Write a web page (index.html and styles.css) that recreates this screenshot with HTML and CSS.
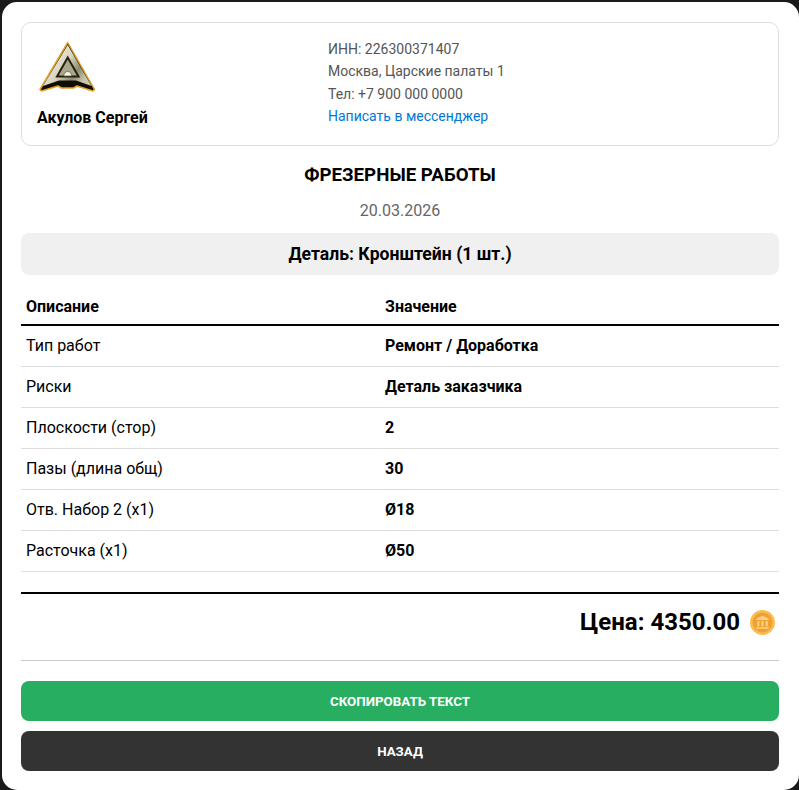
FILE: index.html
```html
<!DOCTYPE html>
<html lang="ru">
<head>
    <meta charset="UTF-8">
    <meta name="viewport" content="width=device-width, initial-scale=1.0">
    <title>Фрезерные работы</title>
    <link rel="stylesheet" href="styles.css">
</head>
<body>

<div class="sheet">
    <div class="header-box">
        <div class="company">
            <svg class="logo" viewBox="0 0 60 60" width="60" height="60">
                <defs>
                    <linearGradient id="metal" x1="0" y1="0" x2="1" y2="0.6">
                        <stop offset="0" stop-color="#8f8b6e"/>
                        <stop offset="0.3" stop-color="#e9e6d6"/>
                        <stop offset="0.55" stop-color="#d8d4be"/>
                        <stop offset="0.8" stop-color="#8d8a72"/>
                        <stop offset="1" stop-color="#c9c6ae"/>
                    </linearGradient>
                </defs>
                <path d="M30.7 4.5 L3 51.5 L4.5 53 L21 48 L24.5 50 L36.5 50 L40 48 L56 53 L57.5 51.5 Z" fill="#0f0d06" stroke="#e0a028" stroke-width="1.5" stroke-linejoin="round"/>
                <path d="M30.7 7 L6 48 L22 42.5 L39 42.5 L54.5 48 Z" fill="url(#metal)"/>
                <path d="M30.7 19.5 L20 38.5 L41.5 38.5 Z" fill="#a9a68c" stroke="#25220f" stroke-width="2"/>
                <path d="M26.7 38 A4 4.5 0 0 1 34.7 38 Z" fill="#f7f4e8" stroke="#55513a" stroke-width="0.7"/>
            </svg>
            <div class="company-name">Акулов Сергей</div>
        </div>
        <div class="contacts">
            <div>ИНН: 226300371407</div>
            <div>Москва, Царские палаты 1</div>
            <div>Тел: +7 900 000 0000</div>
            <a href="#">Написать в мессенджер</a>
        </div>
    </div>

    <h1>ФРЕЗЕРНЫЕ РАБОТЫ</h1>
    <div class="date">20.03.2026</div>
    <div class="detail-title">Деталь: Кронштейн (1 шт.)</div>

    <table class="spec">
        <thead>
            <tr>
                <th class="col-name">Описание</th>
                <th>Значение</th>
            </tr>
        </thead>
        <tbody>
            <tr><td>Тип работ</td><td>Ремонт / Доработка</td></tr>
            <tr><td>Риски</td><td>Деталь заказчика</td></tr>
            <tr><td>Плоскости (стор)</td><td>2</td></tr>
            <tr><td>Пазы (длина общ)</td><td>30</td></tr>
            <tr><td>Отв. Набор 2 (x1)</td><td>Ø18</td></tr>
            <tr><td>Расточка (x1)</td><td>Ø50</td></tr>
        </tbody>
    </table>

    <div class="total">
        <span>Цена: 4350.00</span>
        <svg class="coin" viewBox="0 0 24 24" width="25" height="25">
            <circle cx="12" cy="12" r="12" fill="#fbbc50"/>
            <circle cx="12" cy="12" r="9.5" fill="#f0a02e"/>
            <path d="M12 5.5 L18 8.5 V9.5 H6 V8.5 Z M7 10.5 H9 V15.5 H7 Z M11 10.5 H13 V15.5 H11 Z M15 10.5 H17 V15.5 H15 Z M6 16.5 H18 V18 H6 Z" fill="#fbd48a"/>
        </svg>
    </div>

    <button class="btn btn-copy">Скопировать текст</button>
    <button class="btn btn-back">Назад</button>
</div>

</body>
</html>
```
FILE: styles.css
```css
body {
    margin: 0;
    background: #1a1a1a;
    font-family: Roboto, "Liberation Sans", sans-serif;
    color: #000;
}
.sheet {
    box-sizing: border-box;
    height: 788px;
    margin: 2px 0 0 2px;
    padding: 20px 20px 0 19px;
    background: #fff;
    border-radius: 15px;
    overflow: hidden;
}
.header-box {
    display: flex;
    box-sizing: border-box;
    height: 124px;
    padding: 15px;
    border: 1px solid #ddd;
    border-radius: 10px;
}
.company {
    width: 291px;
    flex-shrink: 0;
}
.logo {
    display: block;
}
.company-name {
    margin-top: 10px;
    font-size: 16px;
    font-weight: bold;
}
.contacts {
    font-size: 14px;
    line-height: 22.4px;
    color: #555;
}
.contacts a {
    color: #0078d4;
    text-decoration: none;
}
h1 {
    margin: 19px 0 0;
    font-size: 18.72px;
    line-height: 21px;
    text-align: center;
}
.date {
    margin-top: 15px;
    font-size: 16px;
    line-height: 19px;
    color: #666;
    text-align: center;
}
.detail-title {
    margin-top: 13px;
    height: 42px;
    line-height: 42px;
    background: #f0f0f0;
    border-radius: 8px;
    font-size: 17.6px;
    font-weight: bold;
    text-align: center;
}
.spec {
    width: 100%;
    margin-top: 11px;
    border-collapse: collapse;
    table-layout: fixed;
    font-size: 16px;
}
.spec th {
    height: 36px;
    padding: 2px 5px 0;
    border-bottom: 2px solid #000;
    text-align: left;
}
.spec .col-name {
    width: 349px;
}
.spec td {
    height: 38px;
    padding: 0 5px 2px;
    border-bottom: 1px solid #ddd;
}
.spec td:last-child {
    font-weight: bold;
}
.total {
    display: flex;
    justify-content: flex-end;
    align-items: center;
    gap: 10px;
    box-sizing: content-box;
    height: 56px;
    margin-top: 20px;
    padding: 0 4px 10px 0;
    border-top: 2px solid #000;
    border-bottom: 1px solid #ccc;
    font-size: 24px;
    font-weight: bold;
}
.btn {
    display: block;
    width: 100%;
    height: 40px;
    border: 0;
    border-radius: 8px;
    color: #fff;
    font-family: inherit;
    font-size: 13.33px;
    font-weight: bold;
    text-transform: uppercase;
}
.btn-copy {
    margin-top: 20px;
    background: #27ae60;
}
.btn-back {
    margin-top: 10px;
    background: #333;
}
```
